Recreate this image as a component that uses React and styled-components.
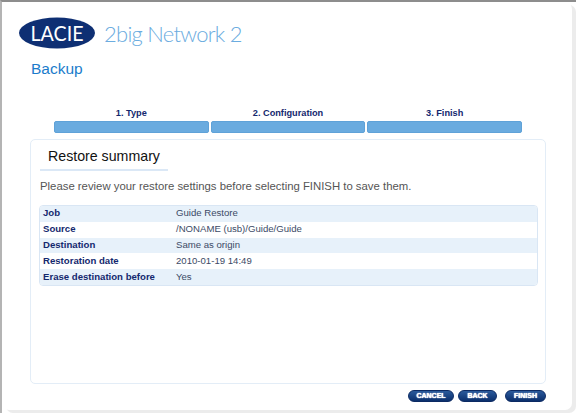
import styled, { createGlobalStyle } from "styled-components";

const GlobalStyle = createGlobalStyle`
  html, body {
    margin: 0;
    padding: 0;
    width: 576px;
    height: 413px;
    overflow: hidden;
    background: #fff;
    font-family: "Liberation Sans", Arial, sans-serif;
  }
`;

const Frame = styled.div`
  box-sizing: border-box;
  width: 576px;
  height: 413px;
  padding: 0 4px 3px 0;
  border-top: 2px solid #8d8d8d;
  border-left: 2px solid #b4b4b4;
`;

const Panel = styled.div`
  box-sizing: border-box;
  height: 100%;
  background: #fff;
  border-radius: 7px;
  box-shadow: 4px 3px 0 #ececec;
  padding: 15px 0 0 17px;
  display: flex;
  flex-direction: column;
`;

const Brand = styled.header`
  display: flex;
  align-items: center;
  gap: 9px;
  height: 32px;
`;

const ProductName = styled.div`
  font-family: "Lato", "Open Sans", sans-serif;
  font-size: 22px;
  font-weight: 300;
  color: #6bace0;
  letter-spacing: -0.75px;
`;

const PageTitle = styled.h1`
  margin: 10px 0 0 12px;
  font-size: 15.5px;
  line-height: 20px;
  font-weight: 400;
  color: #1b7ccb;
`;

const Steps = styled.div`
  display: flex;
  gap: 2px;
  margin: 28px 0 0 35px;
  width: 468px;
`;

const Step = styled.div`
  flex: 1;
  display: flex;
  flex-direction: column;
  align-items: center;
  gap: 2px;
`;

const StepLabel = styled.span`
  font-size: 9.2px;
  line-height: 12px;
  font-weight: 700;
  color: #14286e;
`;

const StepBar = styled.div`
  align-self: stretch;
  height: 12px;
  box-sizing: border-box;
  background: #6aabdf;
  border: 1px solid #5fa2d8;
  border-radius: 2px;
`;

const Card = styled.section`
  box-sizing: border-box;
  width: 516px;
  height: 245px;
  margin: 6px 0 0 11px;
  padding: 0 7px 0 8px;
  border: 1px solid #e3edf7;
  border-radius: 5px;
`;

const CardTitle = styled.h2`
  box-sizing: border-box;
  width: 128px;
  height: 31px;
  margin: 0 0 0 1px;
  padding: 8px 0 0 8px;
  font-size: 14.2px;
  line-height: 16px;
  font-weight: 400;
  color: #111;
  border-bottom: 2px solid #dbe8f6;
`;

const Intro = styled.p`
  margin: 8px 0 0 1px;
  font-size: 11.35px;
  line-height: 14px;
  color: #555;
`;

const SummaryTable = styled.div`
  margin-top: 12px;
  width: 499px;
  box-sizing: border-box;
  border: 1px solid #d9e6f4;
  border-radius: 4px;
  overflow: hidden;
`;

const Row = styled.div`
  box-sizing: border-box;
  display: grid;
  grid-template-columns: 133px 1fr;
  height: 15.8px;
  padding: 0 0 2px 3px;
  align-items: center;
  background: ${(props) => (props.$odd ? "#e7f1fa" : "#fff")};
  font-size: 9.6px;
`;

const RowLabel = styled.span`
  font-weight: 700;
  color: #14286e;
`;

const RowValue = styled.span`
  color: #3c4a66;
`;

const Actions = styled.div`
  display: flex;
  justify-content: flex-end;
  width: 527px;
  margin-top: 6px;
`;

const ActionButton = styled.button`
  width: ${(props) => props.$width}px;
  height: 12px;
  margin-left: ${(props) => props.$gap}px;
  padding: 0;
  border: 1px solid #0c2a63;
  border-radius: 6px;
  background: linear-gradient(#2a5a9c, #0b2f6c);
  color: #fff;
  font-family: "Liberation Sans", Arial, sans-serif;
  font-size: 7px;
  line-height: 10px;
  font-weight: 700;
  text-shadow: 0 0 1px #fff, 0 0 1px #fff;
`;

const rows = [
  ["Job", "Guide Restore"],
  ["Source", "/NONAME (usb)/Guide/Guide"],
  ["Destination", "Same as origin"],
  ["Restoration date", "2010-01-19 14:49"],
  ["Erase destination before", "Yes"],
];

function LacieLogo() {
  return (
    <svg width="76" height="32" viewBox="0 0 76 32">
      <ellipse cx="38" cy="16" rx="38" ry="15.5" fill="#0e2f73" />
      <text
        x="38"
        y="23.5"
        textAnchor="middle"
        fill="#fff"
        fontFamily="Lato, sans-serif"
        fontWeight="400"
        fontSize="21"
        textLength="53"
        lengthAdjust="spacingAndGlyphs"
      >
        LACIE
      </text>
    </svg>
  );
}

export default function App() {
  return (
    <>
      <GlobalStyle />
      <Frame>
        <Panel>
          <Brand>
            <LacieLogo />
            <ProductName>2big Network 2</ProductName>
          </Brand>
          <PageTitle>Backup</PageTitle>
          <Steps>
            {["1. Type", "2. Configuration", "3. Finish"].map((label) => (
              <Step key={label}>
                <StepLabel>{label}</StepLabel>
                <StepBar />
              </Step>
            ))}
          </Steps>
          <Card>
            <CardTitle>Restore summary</CardTitle>
            <Intro>Please review your restore settings before selecting FINISH to save them.</Intro>
            <SummaryTable>
              {rows.map(([label, value], index) => (
                <Row key={label} $odd={index % 2 === 0}>
                  <RowLabel>{label}</RowLabel>
                  <RowValue>{value}</RowValue>
                </Row>
              ))}
            </SummaryTable>
          </Card>
          <Actions>
            <ActionButton $width={46} $gap={0}>CANCEL</ActionButton>
            <ActionButton $width={39} $gap={4}>BACK</ActionButton>
            <ActionButton $width={41} $gap={8}>FINISH</ActionButton>
          </Actions>
        </Panel>
      </Frame>
    </>
  );
}
